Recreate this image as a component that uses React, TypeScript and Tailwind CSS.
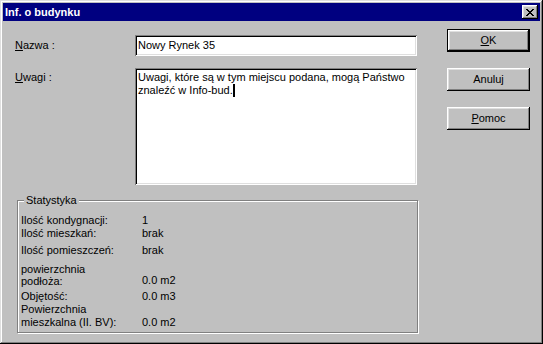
import React from "react";

const raised =
  "shadow-[inset_-1px_-1px_#000,inset_1px_1px_#fff,inset_-2px_-2px_#808080,inset_2px_2px_#dfdfdf]";
const sunken =
  "shadow-[inset_1px_1px_#808080,inset_-1px_-1px_#fff,inset_2px_2px_#000,inset_-2px_-2px_#dfdfdf]";

// 8x7 pixel close glyph
const closeRows = ["##....##", ".##..##.", "..####..", "...##...", "..####..", ".##..##.", "##....##"];

function CloseGlyph() {
  const cells: JSX.Element[] = [];
  closeRows.forEach((row, y) =>
    row.split("").forEach((c, x) => {
      if (c === "#") cells.push(<rect key={`${x}-${y}`} x={x} y={y} width={1} height={1} />);
    })
  );
  return (
    <svg width="8" height="7" viewBox="0 0 8 7" shapeRendering="crispEdges" fill="#000">
      {cells}
    </svg>
  );
}

function Button({ children, primary }: { children: React.ReactNode; primary?: boolean }) {
  return (
    <button
      className={`w-[83px] h-[23px] flex items-center justify-center text-black bg-[#c0c0c0] ${
        primary ? "border border-black" : ""
      }`}
    >
      <span className={`w-full h-full flex items-center justify-center ${raised}`}>{children}</span>
    </button>
  );
}

function StatRow({ label, value, className = "" }: { label: React.ReactNode; value?: string; className?: string }) {
  return (
    <div className={`flex items-end ${className}`}>
      <div className="w-[121px]">{label}</div>
      <div>{value}</div>
    </div>
  );
}

export default function App() {
  return (
    <div
      className="w-[543px] h-[344px] bg-[#c0c0c0] text-[11px] leading-[13px] text-black shadow-[inset_-1px_-1px_#000,inset_1px_1px_#dfdfdf,inset_-2px_-2px_#808080,inset_2px_2px_#fff] flex flex-col"
      style={{ fontFamily: '"Liberation Sans", Arial, sans-serif' }}
    >
      {/* Title bar */}
      <div className="mx-[3px] mt-[3px] h-[18px] bg-[#000080] flex items-center justify-between pl-[2px] pr-[2px]">
        <span className="text-white font-bold text-[11px]">Inf. o budynku</span>
        <span className={`w-[16px] h-[14px] bg-[#c0c0c0] flex items-center justify-center ${raised}`}>
          <CloseGlyph />
        </span>
      </div>

      {/* Body */}
      <div className="flex pl-[15px]">
        <div className="w-[404px]">
          <div className="flex items-center mt-[14px]">
            <span className="w-[120px]">
              <span className="underline">N</span>azwa :
            </span>
            <div className={`w-[282px] h-[21px] bg-white flex items-center px-[3px] ${sunken}`}>Nowy Rynek 35</div>
          </div>

          <div className="flex items-start mt-[12px]">
            <span className="w-[120px] pt-[3px]">
              <span className="underline">U</span>wagi :
            </span>
            <div className={`w-[282px] h-[117px] bg-white px-[3px] pt-[3px] ${sunken}`}>
              Uwagi, które są w tym miejscu podana, mogą Państwo
              <br />
              znaleźć w Info-bud.
              <span className="inline-block w-[2px] h-[13px] bg-black align-top" />
            </div>
          </div>

          {/* Statystyka group */}
          <div className="relative ml-[2px] mt-[15px] w-[401px] h-[133px] border border-[#808080] shadow-[1px_1px_#fff,inset_1px_1px_#fff] pl-[3px] pt-[13px]">
            <span className="absolute left-[6px] top-[-7px] bg-[#c0c0c0] px-[2px]">Statystyka</span>
            <StatRow label="Ilość kondygnacji:" value="1" />
            <StatRow label="Ilość mieszkań:" value="brak" />
            <StatRow label="Ilość pomieszczeń:" value="brak" className="mt-[4px]" />
            <StatRow
              label={
                <div className="leading-[12px]">
                  powierzchnia
                  <br />
                  podłoża:
                </div>
              }
              value="0.0 m2"
              className="mt-[6px]"
            />
            <StatRow label="Objętość:" value="0.0 m3" className="mt-[3px]" />
            <StatRow
              label={
                <div>
                  Powierzchnia
                  <br />
                  mieszkalna (II. BV):
                </div>
              }
              value="0.0 m2"
            />
          </div>
        </div>

        <div className="ml-[28px] mt-[8px] flex flex-col gap-[16px]">
          <Button primary>
            <span className="underline">O</span>K
          </Button>
          <Button>Anuluj</Button>
          <Button>
            <span className="underline">P</span>omoc
          </Button>
        </div>
      </div>
    </div>
  );
}
